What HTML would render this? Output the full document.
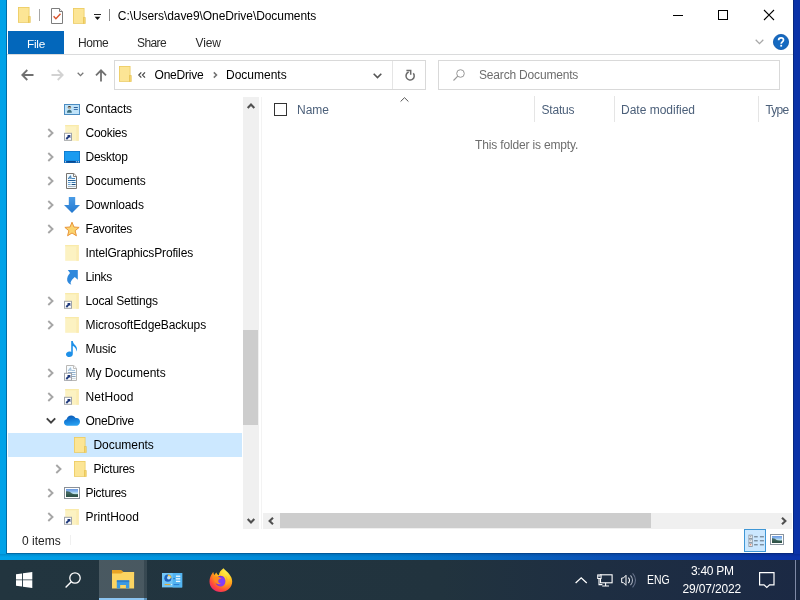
<!DOCTYPE html>
<html>
<head>
<meta charset="utf-8">
<style>
*{box-sizing:border-box;margin:0;padding:0}
html,body{width:800px;height:600px;overflow:hidden}
body{font-family:"Liberation Sans",sans-serif;font-size:12px;color:#000;position:relative;
background:linear-gradient(to right,#00a2e8 0%,#0092dd 25%,#007acc 50%,#0a52b6 75%,#0a32a8 100%);}
.abs{position:absolute}
svg{display:block;overflow:visible}
#win{position:absolute;left:7px;top:0;width:786px;height:553px;background:#fff;will-change:transform}
.t{position:absolute;white-space:nowrap;line-height:14px;height:14px}
#file{position:absolute;left:1px;top:31px;width:56px;height:23px;background:#0367bb;color:#fff;text-align:center;line-height:26px}
.tab{position:absolute;top:31px;height:23px;line-height:25px;color:#2a2a2a}
.hl{position:absolute;height:1px;background:#dadbdc}
.box{position:absolute;border:1px solid #d9d9d9;background:#fff}
.row{position:absolute;left:1px;width:234px;height:24px}
.row .lbl{position:absolute;top:5px;line-height:14px;white-space:nowrap;color:#000;letter-spacing:-0.12px}
.row svg{position:absolute}
.hdr{position:absolute;top:103px;line-height:14px;color:#4c607a;white-space:nowrap}
.cdiv{position:absolute;top:96px;width:1px;height:26px;background:#e5e5e5}
#taskbar{will-change:transform;position:absolute;left:0;top:560px;width:800px;height:40px;background:linear-gradient(to right,#22353f 0%,#21333e 55%,#1e2e42 75%,#1b2944 100%)}
.wt{position:absolute;color:#fff;white-space:nowrap;line-height:14px}
</style>
</head>
<body>

<svg width="0" height="0" style="position:absolute">
<defs>
<linearGradient id="gcloud" x1="0.3" y1="0" x2="0.6" y2="1"><stop offset="0" stop-color="#0a58b4"/><stop offset="0.5" stop-color="#1680da"/><stop offset="1" stop-color="#2aa2f2"/></linearGradient>
<linearGradient id="gdown" x1="0" y1="0" x2="0" y2="1"><stop offset="0" stop-color="#4a9ce6"/><stop offset="1" stop-color="#2378cf"/></linearGradient>
<linearGradient id="gpic" x1="0" y1="0" x2="0" y2="1"><stop offset="0" stop-color="#6a98e0"/><stop offset="0.3" stop-color="#8ab8ec"/><stop offset="0.55" stop-color="#c4e8f2"/><stop offset="0.72" stop-color="#4a7a6a"/><stop offset="1" stop-color="#2c4c48"/></linearGradient>
<symbol id="fold" viewBox="0 0 16 16">
  <rect x="1" y="0" width="11.5" height="15.8" fill="#eccb62"/>
  <rect x="1.8" y="0.8" width="9.9" height="14.2" fill="#fce595"/>
  <rect x="11" y="9.2" width="2.6" height="6.6" fill="#e6c254"/>
  <rect x="11.7" y="9.9" width="1.2" height="5.9" fill="#f5d670"/>
</symbol>
<symbol id="foldp" viewBox="0 0 16 16">
  <rect x="1.200" y="0" width="13.600" height="15.800" fill="#fcf2c2"/>
  <rect x="1.200" y="0" width="13.600" height="1.300" fill="#f9eaaa"/>
  <rect x="12.300" y="1.300" width="2.500" height="14.500" fill="#fbecb2"/>
</symbol>
<symbol id="sc" viewBox="0 0 16 16">
  <rect x="0.500" y="8.300" width="7" height="7" fill="#fff" stroke="#a0a4aa" stroke-width="1"/>
  <path d="M3 9.900H6.400V13.300z" fill="#1f3a7c"/>
  <path d="M5.100 11.200L2.300 14" stroke="#1f3a7c" stroke-width="1.900" fill="none"/>
</symbol>
<symbol id="contact" viewBox="0 0 16 16">
  <rect x="0.500" y="3.500" width="15" height="10" fill="#bfe3f9" stroke="#4b8cc2"/>
  <circle cx="5.400" cy="6.600" r="1.700" fill="#b9b2a4"/>
  <path d="M3.700 6.600A1.700 1.700 0 0 1 7.100 6.600C6.500 5.900 4.400 5.900 3.700 6.600z" fill="#302f2b"/>
  <path d="M3 11.800c0-2.200 1-3 2.400-3s2.400.8 2.400 3z" fill="#3c7182"/>
  <rect x="9.800" y="6" width="4" height="1" fill="#2f5f9c"/>
  <rect x="9.800" y="8" width="4" height="1" fill="#3a6ea8"/>
</symbol>
<symbol id="desk" viewBox="0 0 16 16">
  <rect x="0" y="2" width="16" height="12" fill="#0d72c4"/>
  <rect x="0.700" y="2.700" width="14.600" height="9.300" fill="#1a9bf0"/>
  <rect x="0.500" y="11.800" width="15" height="1.900" fill="#0c5cae"/>
  <rect x="1" y="12.300" width="1" height="1" fill="#e8f6ff"/>
  <rect x="3.500" y="12.300" width="7.500" height="1" fill="#0a3f80"/>
  <rect x="12.200" y="12.300" width="1" height="1" fill="#e8f6ff"/>
  <rect x="14" y="12.300" width="1" height="1" fill="#e8f6ff"/>
</symbol>
<symbol id="doc" viewBox="0 0 16 16">
  <path d="M2.500 0.500h7.300l2.700 2.700v12.300h-10z" fill="#f1faff" stroke="#77736e"/>
  <path d="M9.500 0.800v2.700h2.700" fill="#fff" stroke="#77736e" stroke-width="0.900"/>
  <path d="M4.200 6L6.500 2.700 7.300 6M4.800 5H7" fill="none" stroke="#2c6ea8" stroke-width="0.900"/>
  <rect x="8" y="5" width="3" height="1" fill="#4a88c0"/>
  <rect x="4" y="7" width="7.600" height="1" fill="#245e94"/>
  <rect x="4" y="9" width="2.600" height="1" fill="#6aa0d0"/>
  <rect x="4" y="11" width="2.600" height="1" fill="#6aa0d0"/>
  <rect x="7.600" y="9" width="4" height="1" fill="#3a78b0"/>
  <rect x="7.600" y="11" width="4" height="1" fill="#1c4c7c"/>
  <rect x="4" y="13" width="7.600" height="1" fill="#aab4be"/>
</symbol>
<symbol id="down" viewBox="0 0 16 16">
  <path d="M4.8 0h6.4v8H16l-8 8-8-8h4.8z" fill="url(#gdown)"/>
</symbol>
<symbol id="star" viewBox="0 0 16 16">
  <path d="M8.00 1.20L9.94 6.03L15.13 6.38L11.14 9.72L12.41 14.77L8.00 12.00L3.59 14.77L4.86 9.72L0.87 6.38L6.06 6.03z" fill="#fbd46f" stroke="#e8953a" stroke-width="1" stroke-linejoin="round"/>
</symbol>
<symbol id="link" viewBox="0 0 16 16">
  <path d="M3.800 1H13.800V10.800L10.800 8C9 9.500 7.200 11.500 6.600 13.600C6.500 14.400 7 15.200 7.600 15.600C5.500 15.300 3.600 13.800 3.200 11.500C2.800 8.800 4 6 6 4z" fill="#2e88dc"/>
</symbol>
<symbol id="music" viewBox="0 0 16 16">
  <path d="M7.200 0h1.600c.3 2.200 1.600 3.300 2.900 4.700 1.600 1.700 1.700 4.200.2 6.100.6-2-.1-3.800-1.500-4.900-.500-.4-1-.7-1.600-.9v8c0 1.700-1.500 3-3.400 3S2 14.900 2 13.400s1.500-2.900 3.400-2.900c.7 0 1.300.2 1.800.4z" fill="#1e90e8"/>
</symbol>
<symbol id="cloud" viewBox="0 0 16 16">
  <path d="M3.400 12.800C1.500 12.800 0 11.300 0 9.500C0 7.900 1.100 6.600 2.600 6.300C3.100 4.200 5 2.600 7.300 2.600C9.100 2.600 10.700 3.600 11.500 5.100C11.900 5 12.200 5 12.600 5C14.500 5 16 6.700 16 8.800C16 11 14.400 12.800 12.400 12.800z" fill="url(#gcloud)"/>
</symbol>
<symbol id="pics" viewBox="0 0 16 16">
  <rect x="0.500" y="2.500" width="15" height="11" fill="#fff" stroke="#8a9098"/>
  <rect x="2" y="4" width="12" height="8" fill="url(#gpic)"/>
  <path d="M2 6.500C4 6 6 7 8 8.500C10 9.500 12 9.500 14 9.300V12H2z" fill="#2f5248" opacity="0.850"/>
</symbol>
<symbol id="exp" viewBox="0 0 8 10">
  <path d="M1.300 1L5.500 5 1.300 9" fill="none" stroke="#a6a6a6" stroke-width="1.900"/>
</symbol>
<symbol id="col" viewBox="0 0 10 8">
  <path d="M0.800 1.300L5 5.600 9.200 1.300" fill="none" stroke="#404040" stroke-width="1.900"/>
</symbol>
</defs>
</svg>

<div class="abs" style="left:6px;top:0;width:788px;height:554px;background:rgba(0,20,60,0.38)"></div>
<div id="win">
  <!-- title bar icons -->
  <svg class="abs" style="left:10px;top:7px" width="16" height="16"><use href="#fold"/></svg>
  <div class="abs" style="left:32px;top:9px;width:1px;height:12px;background:#a6a6a6"></div>
  <svg class="abs" style="left:43px;top:8px" width="14" height="16" viewBox="0 0 14 16">
    <path d="M1.500 0.500h8l3 3v12h-11z" fill="#fff" stroke="#7d7d7d"/>
    <path d="M9.500 0.500v3h3" fill="#eee" stroke="#7d7d7d"/>
    <path d="M3.600 8.300l2.300 2.500 4.600-5" fill="none" stroke="#d9532c" stroke-width="1.400"/>
  </svg>
  <svg class="abs" style="left:65px;top:8px" width="16" height="16"><use href="#fold"/></svg>
  <svg class="abs" style="left:87px;top:14px" width="7" height="6" viewBox="0 0 7 6">
    <rect x="0" y="0" width="7" height="1" fill="#222"/>
    <path d="M0.700 2.800h5.600l-2.800 3.100z" fill="#111"/>
  </svg>
  <div class="abs" style="left:102px;top:9px;width:1px;height:12px;background:#8a8a8a"></div>
  <div class="t" style="left:110.800px;top:9px;letter-spacing:-0.07px">C:\Users\dave9\OneDrive\Documents</div>
  <!-- window buttons -->
  <div class="abs" style="left:666px;top:15px;width:10px;height:1px;background:#000"></div>
  <div class="abs" style="left:711px;top:10px;width:10px;height:10px;border:1px solid #000"></div>
  <svg class="abs" style="left:757px;top:10px" width="10" height="10" viewBox="0 0 10 10"><path d="M0 0L10 10M10 0L0 10" stroke="#000" stroke-width="1.100"/></svg>
  <!-- ribbon tabs -->
  <div id="file" style="letter-spacing:-0.3px;font-size:11.800px">File</div>
  <div class="tab" style="left:71px;letter-spacing:-0.45px">Home</div>
  <div class="tab" style="left:130px;letter-spacing:-0.6px">Share</div>
  <div class="tab" style="left:188.400px;letter-spacing:-0.05px">View</div>
  <svg class="abs" style="left:748px;top:39px" width="9" height="6" viewBox="0 0 9 6"><path d="M0.700 0.800L4.500 4.600 8.300 0.800" fill="none" stroke="#a8a8a8" stroke-width="1.300"/></svg>
  <svg class="abs" style="left:766px;top:34px" width="16" height="16" viewBox="0 0 16 16"><circle cx="8" cy="8" r="7.600" fill="#1569c0" stroke="#0d55a8" stroke-width="0.800"/>
    <path d="M5.600 6.200c0-1.500 1.100-2.400 2.500-2.400s2.400.9 2.400 2.100c0 1.900-2.300 1.900-2.300 3.800" fill="none" stroke="#fff" stroke-width="1.700"/><rect x="7.300" y="10.800" width="1.800" height="1.800" fill="#fff"/></svg>
  <div class="hl" style="left:0;top:54px;width:786px"></div>
  <!-- nav arrows -->
  <svg class="abs" style="left:14px;top:69px" width="13" height="12" viewBox="0 0 13 12"><path d="M12.500 6H1.500M6.300 1L1.300 6l5 5" fill="none" stroke="#707070" stroke-width="1.800"/></svg>
  <svg class="abs" style="left:44px;top:69px" width="13" height="12" viewBox="0 0 13 12"><path d="M0.500 6h11M6.700 1l5 5-5 5" fill="none" stroke="#d2d2d2" stroke-width="1.800"/></svg>
  <svg class="abs" style="left:70px;top:72px" width="7" height="5" viewBox="0 0 7 5"><path d="M0.700 0.700L3.500 3.600 6.300 0.700" fill="none" stroke="#777" stroke-width="1.300"/></svg>
  <svg class="abs" style="left:88px;top:69px" width="12" height="13" viewBox="0 0 12 13"><path d="M6 12.500V1.500M1 6.300L6 1.300l5 5" fill="none" stroke="#707070" stroke-width="1.800"/></svg>
  <!-- address bar -->
  <div class="box" style="left:107px;top:60px;width:312px;height:30px"></div>
  <div class="abs" style="left:385px;top:61px;width:1px;height:28px;background:#e5e5e5"></div>
  <svg class="abs" style="left:111px;top:66px" width="16" height="16"><use href="#fold"/></svg>
  <svg class="abs" style="left:131px;top:72px" width="8" height="6" viewBox="0 0 8 6"><path d="M3.300 0.400L0.800 3l2.500 2.600M7 0.400L4.500 3 7 5.600" fill="none" stroke="#484848" stroke-width="1.200"/></svg>
  <div class="t" style="left:147.500px;top:68px;letter-spacing:-0.2px">OneDrive</div>
  <svg class="abs" style="left:206px;top:72px" width="5" height="6" viewBox="0 0 5 6"><path d="M0.800 0.400L3.500 3 0.800 5.600" fill="none" stroke="#707070" stroke-width="1.500"/></svg>
  <div class="t" style="left:219px;top:68px">Documents</div>
  <svg class="abs" style="left:366px;top:73px" width="9" height="6" viewBox="0 0 9 6"><path d="M0.700 0.800L4.500 4.600 8.300 0.800" fill="none" stroke="#555" stroke-width="1.600"/></svg>
  <svg class="abs" style="left:397px;top:69px" width="12" height="12" viewBox="0 0 12 12"><path d="M9.300 4.300A4.100 4.100 0 1 1 4.700 3.050" fill="none" stroke="#6a6a6a" stroke-width="1.500"/><path d="M2.400 1.600H6.700V5.700" fill="none" stroke="#6a6a6a" stroke-width="1.500"/></svg>
  <div class="box" style="left:431px;top:60px;width:342px;height:30px"></div>
  <svg class="abs" style="left:446px;top:69px" width="12" height="12" viewBox="0 0 12 12"><circle cx="7.500" cy="4.500" r="3.800" fill="none" stroke="#979797" stroke-width="1"/><path d="M4.800 7.200L0.500 11.500" stroke="#979797" stroke-width="1.100"/></svg>
  <div class="t" style="left:472px;top:68px;color:#6d6d6d;letter-spacing:-0.18px">Search Documents</div>
  <div class="hl" style="left:0;top:89px;width:786px;background:#ececec;display:none"></div>
  <!-- nav tree -->
<div class="row" style="top:97px"><svg style="left:56px;top:4px" width="16" height="16"><use href="#contact"/></svg><span class="lbl" style="left:77.5px;letter-spacing:-0.107px">Contacts</span></div>
<div class="row" style="top:121px"><svg style="left:39px;top:7px" width="8" height="10"><use href="#exp"/></svg><svg style="left:56px;top:4px" width="16" height="16"><use href="#foldp"/></svg><svg style="left:56px;top:4px" width="16" height="16"><use href="#sc"/></svg><span class="lbl" style="left:77.5px;letter-spacing:-0.263px">Cookies</span></div>
<div class="row" style="top:145px"><svg style="left:39px;top:7px" width="8" height="10"><use href="#exp"/></svg><svg style="left:56px;top:4px" width="16" height="16"><use href="#desk"/></svg><span class="lbl" style="left:77.5px;letter-spacing:-0.263px">Desktop</span></div>
<div class="row" style="top:169px"><svg style="left:39px;top:7px" width="8" height="10"><use href="#exp"/></svg><svg style="left:56px;top:4px" width="16" height="16"><use href="#doc"/></svg><span class="lbl" style="left:77.5px;letter-spacing:-0.042px">Documents</span></div>
<div class="row" style="top:193px"><svg style="left:39px;top:7px" width="8" height="10"><use href="#exp"/></svg><svg style="left:56px;top:4px" width="16" height="16"><use href="#down"/></svg><span class="lbl" style="left:77.5px;letter-spacing:-0.120px">Downloads</span></div>
<div class="row" style="top:217px"><svg style="left:39px;top:7px" width="8" height="10"><use href="#exp"/></svg><svg style="left:56px;top:4px" width="16" height="16"><use href="#star"/></svg><span class="lbl" style="left:77.5px;letter-spacing:-0.320px">Favorites</span></div>
<div class="row" style="top:241px"><svg style="left:56px;top:4px" width="16" height="16"><use href="#foldp"/></svg><span class="lbl" style="left:77.5px;letter-spacing:-0.153px">IntelGraphicsProfiles</span></div>
<div class="row" style="top:265px"><svg style="left:56px;top:4px" width="16" height="16"><use href="#link"/></svg><span class="lbl" style="left:77.5px;letter-spacing:-0.300px">Links</span></div>
<div class="row" style="top:289px"><svg style="left:39px;top:7px" width="8" height="10"><use href="#exp"/></svg><svg style="left:56px;top:4px" width="16" height="16"><use href="#foldp"/></svg><svg style="left:56px;top:4px" width="16" height="16"><use href="#sc"/></svg><span class="lbl" style="left:77.5px;letter-spacing:-0.227px">Local Settings</span></div>
<div class="row" style="top:313px"><svg style="left:39px;top:7px" width="8" height="10"><use href="#exp"/></svg><svg style="left:56px;top:4px" width="16" height="16"><use href="#foldp"/></svg><span class="lbl" style="left:77.5px;letter-spacing:-0.110px">MicrosoftEdgeBackups</span></div>
<div class="row" style="top:337px"><svg style="left:56px;top:4px" width="16" height="16"><use href="#music"/></svg><span class="lbl" style="left:77.5px;letter-spacing:-0.120px">Music</span></div>
<div class="row" style="top:361px"><svg style="left:39px;top:7px" width="8" height="10"><use href="#exp"/></svg><svg style="left:56px;top:4px;opacity:0.5" width="16" height="16"><use href="#doc"/></svg><svg style="left:56px;top:4px" width="16" height="16"><use href="#sc"/></svg><span class="lbl" style="left:77.5px;letter-spacing:0.013px">My Documents</span></div>
<div class="row" style="top:385px"><svg style="left:39px;top:7px" width="8" height="10"><use href="#exp"/></svg><svg style="left:56px;top:4px" width="16" height="16"><use href="#foldp"/></svg><svg style="left:56px;top:4px" width="16" height="16"><use href="#sc"/></svg><span class="lbl" style="left:77.5px;letter-spacing:0.094px">NetHood</span></div>
<div class="row" style="top:409px"><svg style="left:37.500px;top:8px" width="10" height="8"><use href="#col"/></svg><svg style="left:56px;top:4px" width="16" height="16"><use href="#cloud"/></svg><span class="lbl" style="left:77.5px;letter-spacing:-0.282px">OneDrive</span></div>
<div class="row" style="top:433px;background:#cce8ff"><svg style="left:65px;top:4px" width="16" height="16"><use href="#fold"/></svg><span class="lbl" style="left:85.5px;letter-spacing:-0.042px">Documents</span></div>
<div class="row" style="top:457px"><svg style="left:47px;top:7px" width="8" height="10"><use href="#exp"/></svg><svg style="left:65px;top:4px" width="16" height="16"><use href="#fold"/></svg><span class="lbl" style="left:85.5px;letter-spacing:-0.282px">Pictures</span></div>
<div class="row" style="top:481px"><svg style="left:39px;top:7px" width="8" height="10"><use href="#exp"/></svg><svg style="left:56px;top:4px" width="16" height="16"><use href="#pics"/></svg><span class="lbl" style="left:77.5px;letter-spacing:-0.282px">Pictures</span></div>
<div class="row" style="top:505px"><svg style="left:39px;top:7px" width="8" height="10"><use href="#exp"/></svg><svg style="left:56px;top:4px" width="16" height="16"><use href="#foldp"/></svg><svg style="left:56px;top:4px" width="16" height="16"><use href="#sc"/></svg><span class="lbl" style="left:77.5px;letter-spacing:0.002px">PrintHood</span></div>
  <!-- columns -->
  <div class="abs" style="left:267px;top:103px;width:13px;height:13px;border:1px solid #333"></div>
  <div class="hdr" style="left:290px">Name</div>
  <svg class="abs" style="left:393px;top:97px" width="9" height="5" viewBox="0 0 9 5"><path d="M0.600 4.500L4.500 0.700 8.400 4.500" fill="none" stroke="#555" stroke-width="1"/></svg>
  <div class="hdr" style="left:534.500px;letter-spacing:-0.2px">Status</div>
  <div class="hdr" style="left:614px">Date modified</div>
  <div class="hdr" style="left:758.500px;letter-spacing:-0.8px">Type</div>
  <div class="cdiv" style="left:527px"></div>
  <div class="cdiv" style="left:607px"></div>
  <div class="cdiv" style="left:751px"></div>
  <div class="t" style="left:468px;top:138px;color:#6d6d6d;letter-spacing:-0.16px">This folder is empty.</div>
  <!-- scrollbars -->
  <div class="abs" style="left:236px;top:97px;width:16px;height:432px;background:#f0f0f0"></div>
  <div class="abs" style="left:236px;top:329.600px;width:15px;height:95px;background:#cdcdcd"></div>
  <svg class="abs" style="left:240px;top:103px" width="8" height="6" viewBox="0 0 8 6"><path d="M0.700 5L4 1.600 7.300 5" fill="none" stroke="#505050" stroke-width="2.100"/></svg>
  <svg class="abs" style="left:240px;top:518px" width="8" height="6" viewBox="0 0 8 6"><path d="M0.700 1L4 4.400 7.300 1" fill="none" stroke="#505050" stroke-width="2.100"/></svg>
  <div class="abs" style="left:254px;top:97px;width:1px;height:432px;background:#f3f3f3"></div>
  <div class="abs" style="left:256px;top:513px;width:529px;height:16px;background:#f0f0f0"></div>
  <div class="abs" style="left:273px;top:513px;width:370.800px;height:15px;background:#cdcdcd"></div>
  <svg class="abs" style="left:261px;top:517px" width="6" height="8" viewBox="0 0 6 8"><path d="M5 0.700L1.600 4 5 7.300" fill="none" stroke="#505050" stroke-width="2.100"/></svg>
  <svg class="abs" style="left:774px;top:517px" width="6" height="8" viewBox="0 0 6 8"><path d="M1 0.700L4.400 4 1 7.300" fill="none" stroke="#505050" stroke-width="2.100"/></svg>
  <!-- status bar -->
  <div class="t" style="left:15px;top:534px;color:#222">0 items</div>
  <div class="abs" style="left:63px;top:535px;width:1px;height:10px;background:#f0f0f0"></div>
  <div class="abs" style="left:737px;top:529px;width:22px;height:23px;background:#cce8ff;border:1px solid #3f97d6"></div>
  <svg class="abs" style="left:741px;top:534px" width="17" height="14" viewBox="0 0 17 14"><g transform="translate(0.500 0.700)">
    <g fill="#fff" stroke="#8a96a2" stroke-width="0.900"><rect x="0.450" y="0.450" width="3.300" height="3.300"/><rect x="0.450" y="4.450" width="3.300" height="3.300"/><rect x="0.450" y="8.450" width="3.300" height="3.300"/></g>
    <rect x="1.600" y="1.600" width="1" height="1" fill="#6a7a88"/><rect x="1.600" y="5.600" width="1" height="1" fill="#8a98a4"/>
    <rect x="1.600" y="9.600" width="1" height="1" fill="#d9532c"/>
    <g fill="#5d6d7b"><rect x="5.600" y="1.600" width="3.600" height="1"/><rect x="11.400" y="1.600" width="4" height="1"/><rect x="5.600" y="5.600" width="3.600" height="1"/><rect x="11.400" y="5.600" width="4" height="1"/><rect x="5.600" y="9.600" width="3.600" height="1"/><rect x="11.400" y="9.600" width="4" height="1"/></g>
  </g></svg>
  <svg class="abs" style="left:763px;top:534px" width="14" height="11" viewBox="0 0 14 11"><rect x="0.500" y="0.500" width="13" height="10" fill="#fff" stroke="#8a949e"/><rect x="2" y="2" width="10" height="7" fill="url(#gpic)"/><path d="M2 4.200C4 4 5.500 5 7 6.200C9 7 10.500 7 12 6.800V9H2z" fill="#2f5248" opacity="0.850"/></svg>
</div>
<!-- strip shadow below window -->
<div class="abs" style="left:0;top:554px;width:800px;height:6px;background:linear-gradient(to bottom,rgba(0,0,40,0.14),rgba(0,0,40,0) 50%)"></div>
<div id="taskbar">
  <div class="abs" style="left:99px;top:0;width:44.500px;height:40px;background:rgba(255,255,255,0.18)"></div>
  <div class="abs" style="left:144px;top:0;width:3px;height:40px;background:rgba(255,255,255,0.10)"></div>
  <div class="abs" style="left:144px;top:38px;width:3px;height:2px;background:#5a90b8"></div>
  <div class="abs" style="left:99px;top:38px;width:44.500px;height:2px;background:#8cc4f0"></div>
  <!-- start -->
  <svg class="abs" style="left:16px;top:12px" width="16" height="16" viewBox="0 0 16 16"><path d="M0 2.200L6 1.400V7.500H0zM6.900 1.300L16.300 0V7.500H6.900zM0 8.300H6V14.500L0 13.700zM6.900 8.300H16.300V16L6.900 14.700z" fill="#fff"/></svg>
  <!-- search -->
  <svg class="abs" style="left:64.500px;top:11.600px" width="16" height="16" viewBox="0 0 16 16"><circle cx="10" cy="6" r="5.200" fill="none" stroke="#fff" stroke-width="1.300"/><path d="M6.300 9.700L0.600 15.400" stroke="#fff" stroke-width="1.400"/></svg>
  <!-- explorer -->
  <svg class="abs" style="left:111.700px;top:10px" width="22.100" height="18.400" viewBox="0 0 23 19" preserveAspectRatio="none">
    <path d="M0 0h9.500l2.500 2h11v4H0z" fill="#e8a325"/>
    <path d="M0 3.500h9.500l2.500-1.500h11V19H0z" fill="#fcd462"/>
    <path d="M5 19v-7h13v7h-3.500v-3.500h-6V19z" fill="#3d9ae2"/>
    <rect x="5" y="10.500" width="13" height="2" fill="#2a7fcf"/>
  </svg>
  <!-- control panel-ish -->
  <svg class="abs" style="left:161.800px;top:12.700px" width="20.200" height="14.400" viewBox="0 0 20 14" preserveAspectRatio="none">
    <rect x="0" y="0" width="20" height="14" fill="#72c6f7"/>
    <rect x="10.500" y="0" width="9.500" height="14" fill="#52b4f1"/>
    <circle cx="5.800" cy="5" r="3.500" fill="#1e62be"/>
    <path d="M5.800 5V1.500A3.500 3.500 0 0 1 9.300 5z" fill="#f6be34"/>
    <circle cx="6.700" cy="4.600" r="1.700" fill="#b4e0fa"/>
    <rect x="11.200" y="4.800" width="1.600" height="1.200" fill="#2a7ad0"/>
    <g fill="#eaf6fe"><rect x="13.800" y="2.500" width="4.300" height="1.300"/><rect x="13.800" y="5" width="4.300" height="1.300"/><rect x="13.800" y="7.500" width="4.300" height="1.300"/></g>
    <rect x="2.600" y="10.800" width="5.600" height="1" fill="#e6a828"/>
    <rect x="9" y="10.800" width="1" height="1" fill="#eaf6fe"/>
    <rect x="11.500" y="10.800" width="5.600" height="1" fill="#2a7ad0"/>
  </svg>
  <!-- firefox -->
  <svg class="abs" style="left:209.250px;top:7.500px" width="23.500" height="24" viewBox="0 0 23.500 24">
    <defs><radialGradient id="ff1" cx="0.760" cy="0.100" r="1.080"><stop offset="0" stop-color="#fff44f"/><stop offset="0.300" stop-color="#ffd02a"/><stop offset="0.550" stop-color="#ff9a1a"/><stop offset="0.780" stop-color="#ff4a3a"/><stop offset="1" stop-color="#e31587"/></radialGradient>
    <radialGradient id="ff2" cx="0.600" cy="0.550" r="0.650"><stop offset="0" stop-color="#7a42ff"/><stop offset="0.600" stop-color="#8a3af0"/><stop offset="1" stop-color="#5b2bc0"/></radialGradient></defs>
    <path d="M14.500 0.300C16 2.200 19 4 20.500 6.500C22.200 8.600 23.200 11 23.200 13.500C23.200 19.500 18 24 11.800 24C5.500 24 0.500 19.500 0.500 13.500C0.500 10 1.800 7.500 3.200 5.500C3.500 4.600 4 4.200 4.300 4C4.500 5.500 5 6.500 5.600 7C6 5.800 6.600 5 7.500 4.500C7.800 5.800 8.500 6.800 9.800 7.300C10 4.500 12 2 14.500 0.300z" fill="url(#ff1)"/>
    <g transform="translate(-1.300 0.700)"><path d="M10.500 7.800C12.500 6.600 15.500 7 17 9.500C18.200 11.600 18 14.600 16.200 16.500C14.200 18.300 11 18.200 9.200 16.400C7.700 14.800 7.500 12.500 8.500 10.800C9 9.500 9.700 8.500 10.500 7.800z" fill="url(#ff2)"/></g>
    <path d="M3.500 9.500C6 7.800 10 8.200 12.500 10.800C11 10.400 9.600 11 9.300 12.400C9 14 10 15.400 12 15.600C10.300 16.600 7.600 16.400 6.300 14.500C5.600 13.500 5.300 12 5.600 11C4.800 10.400 4 10 3.500 9.500z" fill="#ff8a1f"/>
    <path d="M16.300 8C19 10 19.800 14.500 17.300 17.500C18.200 14.500 17.600 10.800 16.300 8z" fill="#ffae2a"/>
  </svg>
  <!-- tray -->
  <svg class="abs" style="left:574.800px;top:16.800px" width="12.400" height="6.600" viewBox="0 0 14 8" preserveAspectRatio="none"><path d="M0.700 7.300L7 1 13.300 7.300" fill="none" stroke="#fff" stroke-width="1.400"/></svg>
  <svg class="abs" style="left:596px;top:13px" width="18" height="14" viewBox="0 0 18 14">
    <rect x="4.500" y="1.800" width="11.600" height="8" fill="none" stroke="#fff" stroke-width="1.100"/>
    <path d="M9.600 9.800V13M6.200 13H13" stroke="#fff" stroke-width="1.100" fill="none"/>
    <rect x="1.700" y="1.900" width="3.400" height="3.600" fill="#1e2d43" stroke="#fff" stroke-width="1"/>
    <rect x="2.200" y="2.400" width="2.400" height="1.200" fill="#e8ecf2"/>
    <path d="M3 5.800V11.600H6.400" stroke="#fff" stroke-width="1.100" fill="none"/>
  </svg>
  <svg class="abs" style="left:621px;top:13px" width="17" height="15" viewBox="0 0 17 15">
    <path d="M0.700 5H2.400L5 2.300V12.300L2.400 9.600H0.700z" fill="none" stroke="#fff" stroke-width="1"/>
    <path d="M7.360 4.540A3.900 3.900 0 0 1 7.360 10.060" fill="none" stroke="#fff" stroke-width="1.100"/>
    <path d="M9.480 2.420A6.900 6.900 0 0 1 9.480 12.180" fill="none" stroke="#aab2c0" stroke-width="1.100"/>
    <path d="M11.600 0.300A9.900 9.900 0 0 1 11.600 14.300" fill="none" stroke="#66718a" stroke-width="1.100"/>
  </svg>
  <div class="wt" style="left:647.300px;top:13px;transform:scaleX(0.87);transform-origin:0 0">ENG</div>
  <div class="wt" style="left:691px;top:3.500px;letter-spacing:-0.3px">3:40 PM</div>
  <div class="wt" style="left:682.500px;top:22px;letter-spacing:-0.15px">29/07/2022</div>
  <svg class="abs" style="left:759px;top:12px" width="16" height="16" viewBox="0 0 16 16"><path d="M0.600 0.600H15V12.800H10.600L7.800 15.400 5 12.800H0.600z" fill="none" stroke="#fff" stroke-width="1.200"/></svg>
  <div class="abs" style="left:795px;top:0;width:1px;height:40px;background:#7f8aa6"></div>
</div>
</body>
</html>
